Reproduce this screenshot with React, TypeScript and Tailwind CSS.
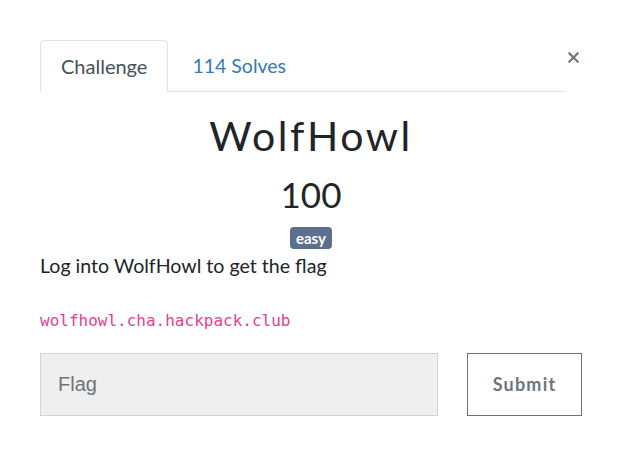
import { X } from 'lucide-react';

export default function App() {
  return (
    <div className="w-[622px] h-[476px] bg-white px-10 pt-10 font-['Lato',sans-serif] text-[#212529]">
      <div className="flex items-start">
        <div className="flex flex-1 border-b border-[#dee2e6]">
          <div className="-mb-px px-[20px] h-[52px] flex items-center border border-[#dee2e6] border-b-white rounded-t bg-white text-[20px] text-[#495057]">
            Challenge
          </div>
          <div className="px-6 h-[51px] flex items-center text-[19.5px] text-[#337ab7]">114 Solves</div>
        </div>
        <button className="w-[17px] mt-[8px] flex justify-end text-[#6c757d]">
          <X size={19} strokeWidth={3} />
        </button>
      </div>

      <div className="flex flex-col items-center">
        <h1 className="mt-[20px] text-[41px] font-normal tracking-[2.6px] leading-[48px]">WolfHowl</h1>
        <div className="mt-[13px] text-[35px] font-normal leading-[42px]">100</div>
        <span className="mt-[12px] px-[6px] h-[22px] flex items-center rounded bg-[#5c6f8e] text-white text-[15px] font-bold">
          easy
        </span>
      </div>

      <p className="mt-[5px] text-[19.6px] leading-[24px]">Log into WolfHowl to get the flag</p>
      <p className="mt-[31px] font-['DejaVu_Sans_Mono',monospace] text-[16px] leading-[24px] text-[#e83e8c]">
        wolfhowl.cha.hackpack.club
      </p>

      <div className="mt-[20px] flex items-center">
        <input
          placeholder="Flag"
          className="w-[398px] h-[63px] px-[17px] bg-[#efefef] border border-[#ced4da] text-[20px] font-['Liberation_Sans',sans-serif] placeholder:text-[#6c757d] outline-none"
        />
        <button className="ml-auto w-[115px] h-[63px] border border-[#6c757d] text-[#6c757d] text-[18px] font-bold tracking-[1.2px]">
          Submit
        </button>
      </div>
    </div>
  );
}
